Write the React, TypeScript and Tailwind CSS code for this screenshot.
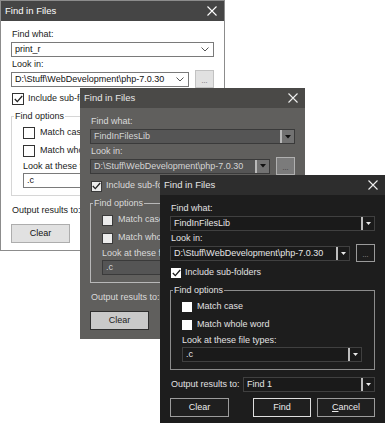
import React from 'react'

type Theme = 'light' | 'gray' | 'dark'

const THEMES = {
  light: {
    frame: 'bg-white border border-[#8c8c8c]',
    title: 'bg-[#454545] text-white',
    text: 'text-[#1a1a1a]',
    field: 'bg-white border border-[#7a7a7a] text-[#111]',
    dots: 'bg-[#e1e1e1] border border-[#c2c2c2] text-[#555]',
    group: 'border-[#d6d6d6]',
    box: 'bg-white border border-[#333]',
    tick: '#222',
    button: 'bg-[#e1e1e1] border border-[#adadad] text-[#111]',
    def: 'bg-[#e1e1e1] border border-[#0078d7] text-[#111]',
    x: '#ffffff',
  },
  gray: {
    frame: 'bg-[#605f5d]',
    title: 'bg-[#4a4947] text-[#e8e8e8]',
    text: 'text-[#dadada]',
    field: 'bg-[#555555] border border-[#3a3a3a] text-[#d4d4d4]',
    dots: 'bg-[#7b7b7b] border border-[#b0b0b0] text-[#333]',
    group: 'border-[#b8b8b8]',
    box: 'bg-[#ececec] border border-[#3a3a3a]',
    tick: '#222',
    button: 'bg-[#c9c9c9] border border-[#2e2e2e] text-[#222]',
    def: 'bg-[#c9c9c9] border border-[#111] text-[#222]',
    x: '#f0f0f0',
  },
  dark: {
    frame: 'bg-[#1d1d1d]',
    title: 'bg-[#2d2d2d] text-[#e6e6e6]',
    text: 'text-[#e2e2e2]',
    field: 'bg-[#1a1a1a] border border-[#404040] text-[#e6e6e6]',
    dots: 'bg-[#1d1d1d] border border-[#9a9a9a] text-[#aaa]',
    group: 'border-[#8c8c8c]',
    box: 'bg-white',
    tick: '#1a1a1a',
    button: 'bg-[#1f1f1f] border border-[#9c9c9c] text-[#ececec]',
    def: 'bg-[#1f1f1f] border border-[#e0e0e0] text-[#ececec]',
    x: '#f0f0f0',
  },
}

function Arrow({ theme }: { theme: Theme }) {
  if (theme === 'light') {
    return (
      <div className="w-[17px] h-full flex items-center justify-center">
        <svg width="8" height="5" viewBox="0 0 8 5">
          <polyline points="0.5,0.5 4,4 7.5,0.5" fill="none" stroke="#555" strokeWidth="1" />
        </svg>
      </div>
    )
  }
  if (theme === 'gray') {
    return (
      <div className="w-[14px] h-full flex items-center justify-center bg-[#727272] border-l-2 border-[#b9b9b9]">
        <svg width="6" height="4" viewBox="0 0 6 4">
          <polygon points="0,0 6,0 3,3.5" fill="#111" />
        </svg>
      </div>
    )
  }
  return (
    <div className="w-[13px] h-full flex items-center justify-center border-l-2 border-[#bdbdbd]">
      <svg width="5" height="3" viewBox="0 0 5 3">
        <polygon points="0,0 5,0 2.5,3" fill="#e8e8e8" />
      </svg>
    </div>
  )
}

function Combo({ theme, text, className = '' }: { theme: Theme; text: string; className?: string }) {
  const t = THEMES[theme]
  return (
    <div className={`h-[15px] flex items-center ${t.field} ${className}`}>
      <span className="flex-1 pl-[3px] leading-[13px] whitespace-nowrap overflow-hidden">{text}</span>
      <Arrow theme={theme} />
    </div>
  )
}

function Check({ theme, checked }: { theme: Theme; checked?: boolean }) {
  const t = THEMES[theme]
  const size = theme === 'light' ? 'w-[12px] h-[12px]' : theme === 'gray' ? 'w-[11px] h-[11px]' : 'w-[10px] h-[10px]'
  return (
    <div className={`${size} shrink-0 flex items-center justify-center ${t.box}`}>
      {checked && (
        <svg width="9" height="8" viewBox="0 0 9 8">
          <polyline points="0.8,4 3.3,6.6 8.2,1" fill="none" stroke={t.tick} strokeWidth="1.3" />
        </svg>
      )}
    </div>
  )
}

function Dialog({ theme, find, className }: { theme: Theme; find: string; className: string }) {
  const t = THEMES[theme]
  return (
    <div className={`absolute w-[225px] flex flex-col overflow-hidden text-[9px] ${t.frame} ${className}`}>
      {/* Title */}
      <div className={`h-[20px] shrink-0 flex items-center justify-between pl-[4px] pr-[7px] text-[9.5px] ${t.title}`}>
        <span>Find in Files</span>
        <svg width="10" height="10" viewBox="0 0 10 10">
          <path d="M0.5 0.5 L9.5 9.5 M9.5 0.5 L0.5 9.5" stroke={t.x} strokeWidth="1.1" />
        </svg>
      </div>

      {/* Body */}
      <div className={`flex flex-col px-[10px] pt-[7px] ${t.text}`}>
        <div className="leading-[12px] pl-[1px]">Find what:</div>
        <Combo theme={theme} text={find} className="mt-[2px]" />
        <div className="leading-[12px] mt-[1px] pl-[1px]">Look in:</div>
        <div className="h-[16px] mt-[1px] flex items-center gap-[6px]">
          <Combo theme={theme} text={'D:\\Stuff\\WebDevelopment\\php-7.0.30'} className="flex-1" />
          <div className={`w-[19px] h-[18px] shrink-0 flex items-end justify-center text-[7px] leading-[12px] ${t.dots}`}>...</div>
        </div>
        <div className="h-[12px] mt-[6px] flex items-center gap-[4px] pl-[1px] whitespace-nowrap">
          <Check theme={theme} checked />
          <span>Include sub-folders</span>
        </div>

        <fieldset className={`mt-[5px] border ${t.group} px-0 pb-[7px]`}>
          <legend className="ml-[2px] px-[1px] leading-[12px]">Find options</legend>
          <div className="flex flex-col pl-[11px] pr-[12px]">
            <div className="h-[12px] mt-[5px] flex items-center gap-[5px] whitespace-nowrap">
              <Check theme={theme} />
              <span>Match case</span>
            </div>
            <div className="h-[12px] mt-[6px] flex items-center gap-[5px] whitespace-nowrap">
              <Check theme={theme} />
              <span>Match whole word</span>
            </div>
            <div className="leading-[12px] mt-[3px] whitespace-nowrap">Look at these file types:</div>
            <Combo theme={theme} text=".c" className="mt-[1px]" />
          </div>
        </fieldset>

        <div className="h-[15px] mt-[7px] flex items-center">
          <span className="w-[73px] shrink-0 pl-[1px] whitespace-nowrap">Output results to:</span>
          <Combo theme={theme} text="Find 1" className="flex-1" />
        </div>

        <div className="h-[19px] mt-[6px] flex items-center">
          <div className={`w-[59px] h-full flex items-center justify-center ${t.button}`}>Clear</div>
          <div className={`w-[58px] h-full ml-auto flex items-center justify-center ${t.def}`}>Find</div>
          <div className={`w-[58px] h-full ml-[6px] flex items-center justify-center ${t.button}`}>
            <span><span className="underline">C</span>ancel</span>
          </div>
        </div>
      </div>
    </div>
  )
}

export default function App() {
  return (
    <div
      className="relative w-[385px] h-[425px] overflow-hidden bg-white"
      style={{ fontFamily: '"Liberation Sans", Arial, sans-serif' }}
    >
      <Dialog theme="light" find="print_r" className="left-0 top-0 h-[251px]" />
      <Dialog theme="gray" find="FindInFilesLib" className="left-[80px] top-[88px] h-[251px]" />
      <Dialog theme="dark" find="FindInFilesLib" className="left-[160px] top-[175px] w-[223px] h-[248px]" />
    </div>
  )
}
